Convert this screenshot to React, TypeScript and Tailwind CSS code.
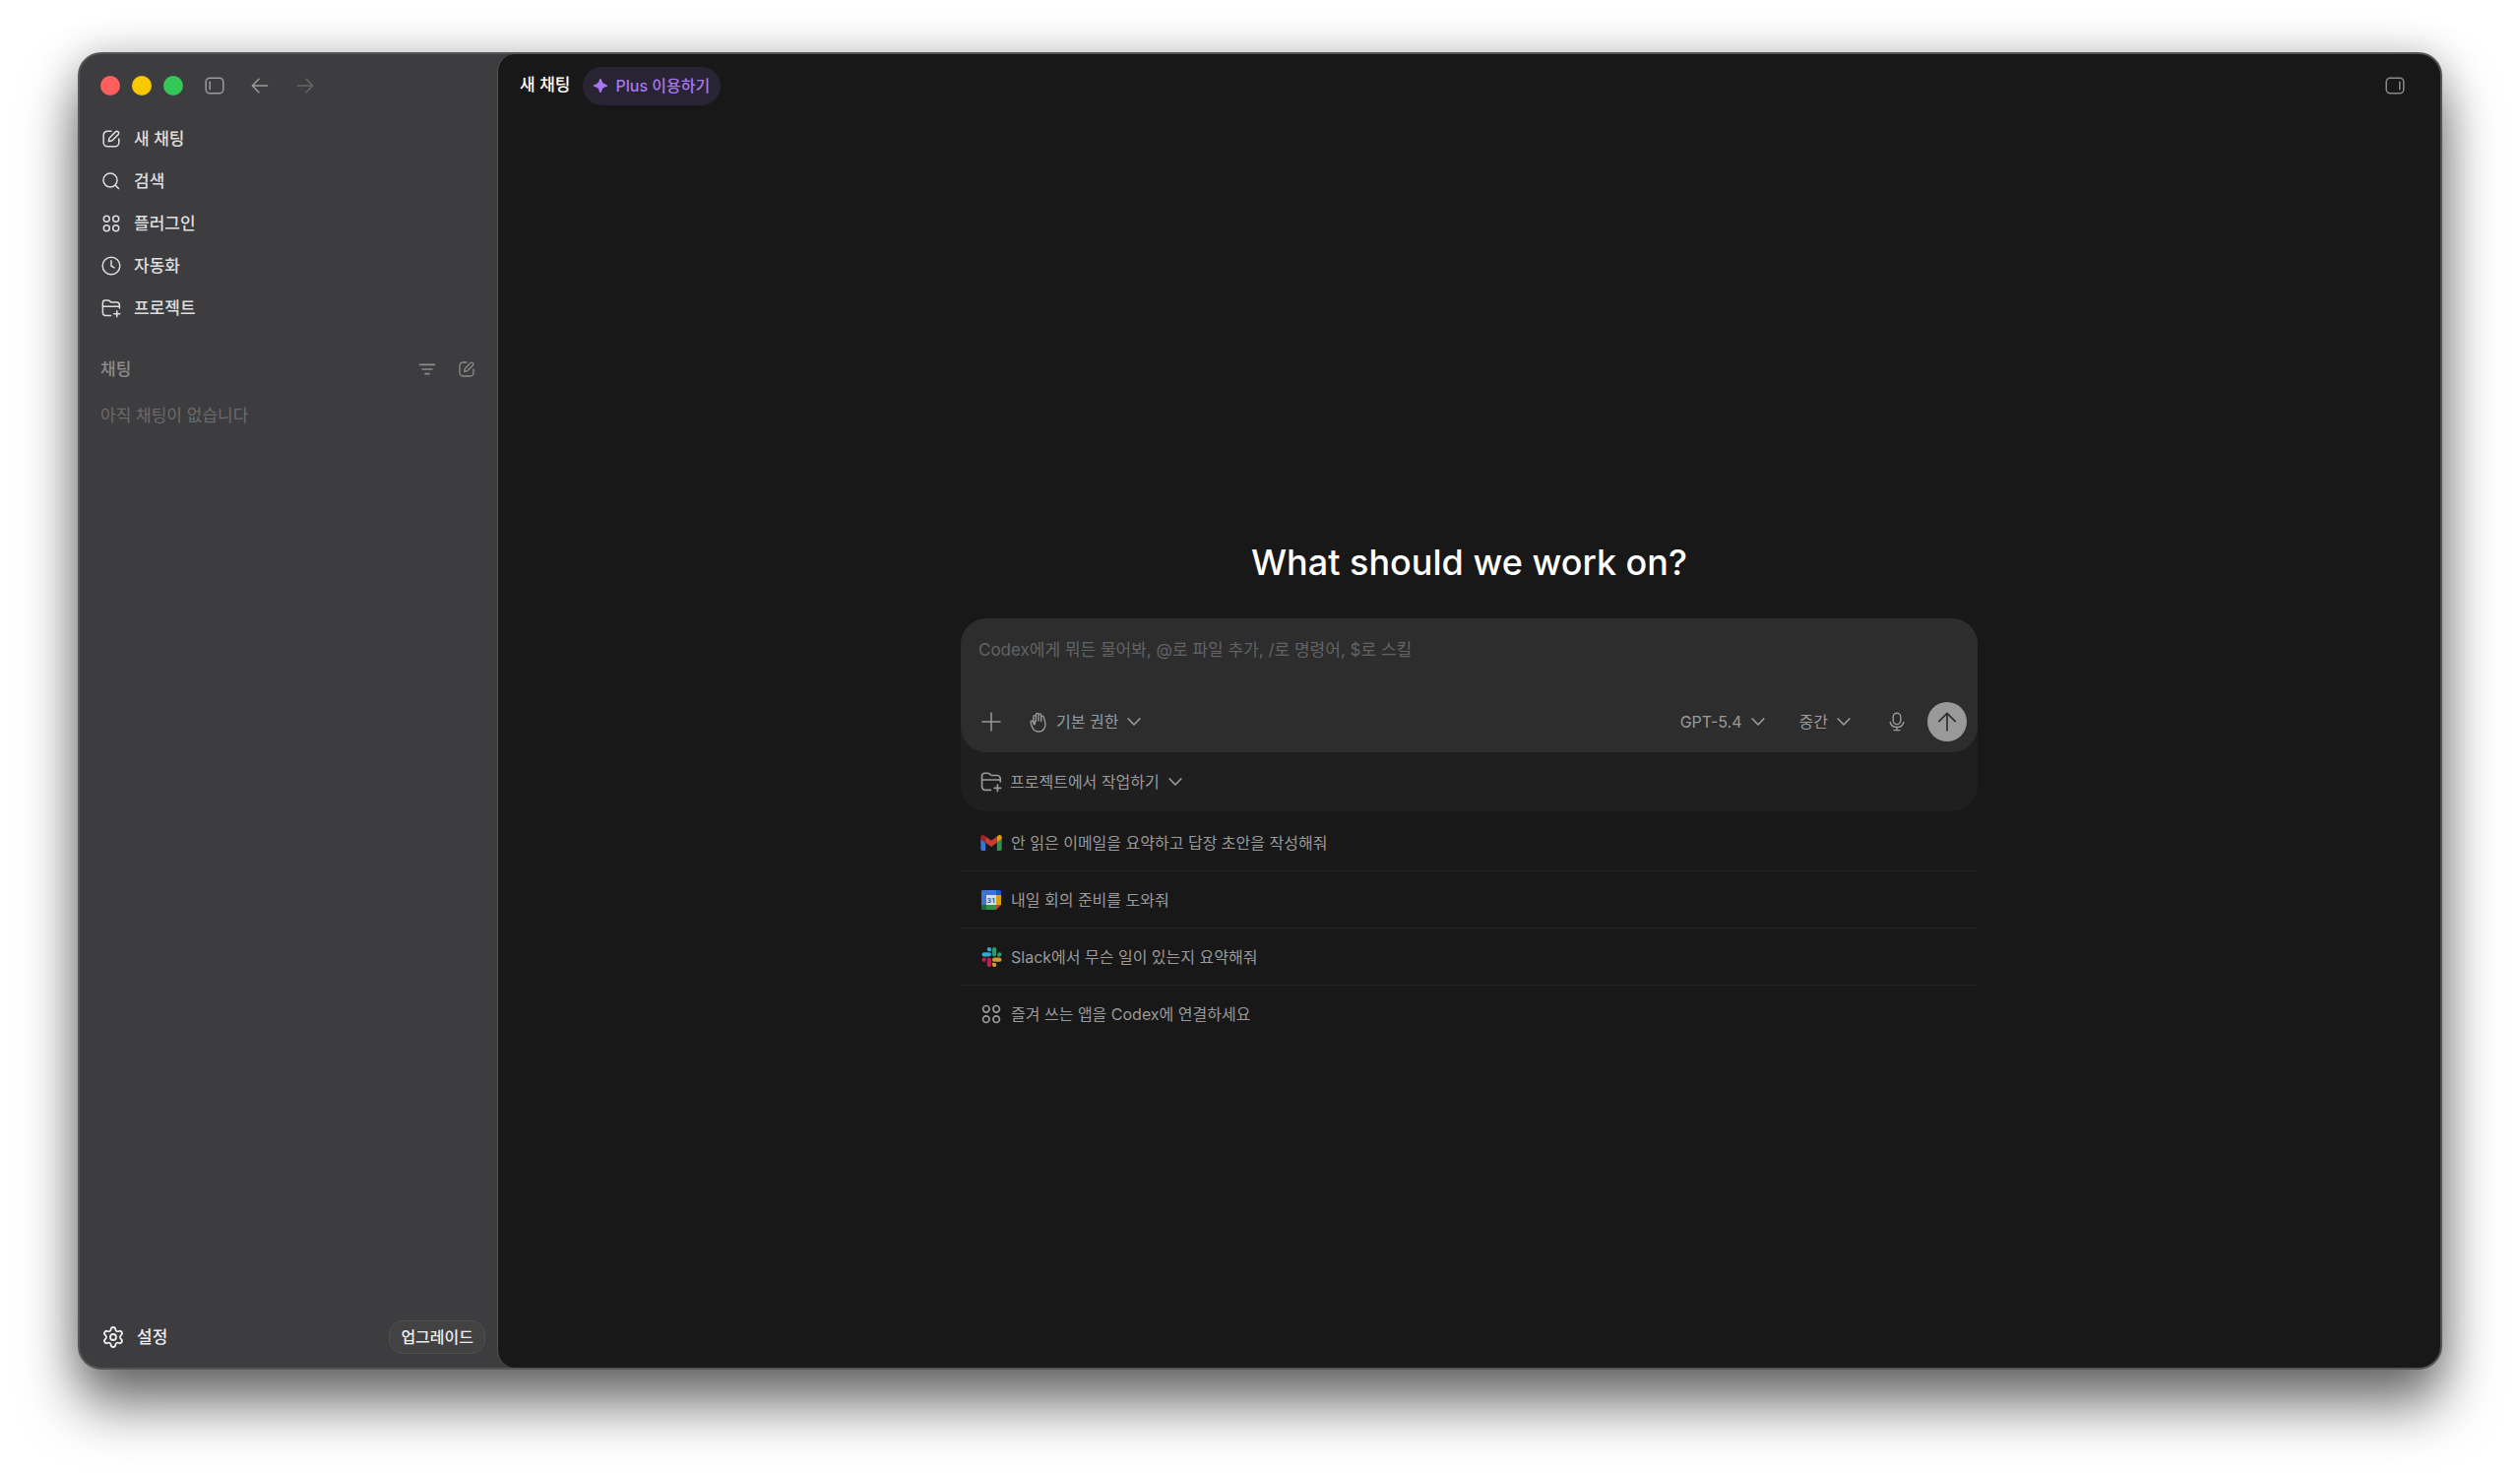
import { ReactNode } from 'react';
import { Settings } from 'lucide-react';

type IconProps = { className?: string };

function Svg({ className, width = 1.5, children }: IconProps & { width?: number; children: ReactNode }) {
    return (
        <svg
            className={`shrink-0 ${className ?? 'size-5'}`}
            viewBox="0 0 20 20"
            fill="none"
            stroke="currentColor"
            strokeWidth={width}
            strokeLinecap="round"
            strokeLinejoin="round"
            aria-hidden="true"
        >
            {children}
        </svg>
    );
}

const ComposeIcon = ({ className }: IconProps) => (
    <Svg className={className}>
        <path d="M10 2.2H6.2a4 4 0 0 0-4 4v7.6a4 4 0 0 0 4 4h7.6a4 4 0 0 0 4-4V10" />
        <path d="M7.4 12.6l.5-2.7a2 2 0 0 1 .6-1.1l5.9-5.9a1.9 1.9 0 0 1 2.7 2.7l-5.9 5.9a2 2 0 0 1-1.1.6z" />
    </Svg>
);

const SearchIcon = ({ className }: IconProps) => (
    <Svg className={className}>
        <circle cx="9" cy="9" r="7" />
        <path d="M14.1 14.1l3.4 3.4" />
    </Svg>
);

const AppsIcon = ({ className }: IconProps) => (
    <Svg className={className}>
        <circle cx="5.3" cy="5.3" r="3" />
        <circle cx="14.7" cy="5.3" r="3" />
        <circle cx="5.3" cy="14.7" r="3" />
        <circle cx="14.7" cy="14.7" r="3" />
    </Svg>
);

const ClockIcon = ({ className }: IconProps) => (
    <Svg className={className}>
        <circle cx="10" cy="10" r="8.8" />
        <path d="M10 4.8V10l3 1.9" />
    </Svg>
);

const FolderPlusIcon = ({ className }: IconProps) => (
    <Svg className={className}>
        <path d="M9.6 17.6H4.4a3 3 0 0 1-3-3V4.6A2.6 2.6 0 0 1 4 2h2.6c.9 0 1.4.3 2 .9l.5.5c.5.5 1 .7 1.7.7h4.6a3 3 0 0 1 3 3v2.8" />
        <path d="M1.4 8.2h17M15.8 12.8v6M12.8 15.8h6" />
    </Svg>
);

const ArrowIcon = ({ className, d }: IconProps & { d: string }) => (
    <Svg className={className}>
        <path d={d} />
    </Svg>
);

const PanelIcon = ({ x }: { x: number }) => (
    <Svg>
        <rect x="1.2" y="2.2" width="17.6" height="15.6" rx="4" />
        <path d={`M${x} 6.2v7.6`} />
    </Svg>
);

const FilterIcon = ({ className }: IconProps) => (
    <Svg className={className} width={1.7}>
        <path d="M2.5 5.4h15M5.2 10h9.600M8 14.600h4" />
    </Svg>
);

const HandIcon = ({ className }: IconProps) => (
    <Svg className={className} width={1.3}>
        <path d="M5.500 9.500V4.700a1.250 1.250 0 0 1 2.500 0V9M8 8.500V2.500a1.250 1.250 0 0 1 2.500 0v6M10.500 3a1.250 1.250 0 0 1 2.500 0v6M13 5.200a1.250 1.250 0 0 1 2.500 0l1.300 4.200c1.200 5.300-1.300 9.700-6.300 9.700-3.600 0-5.700-2-6.600-5.600l-1-3.300c-.4-1.500 1.500-2 2.200-.7l.9 2.200c.3.800 1 .7 1-.2V9" />
    </Svg>
);

const MicIcon = ({ className }: IconProps) => (
    <Svg className={className} width={1.4}>
        <rect x="6.200" y="1.200" width="7.600" height="11.400" rx="3.800" />
        <path d="M3.200 10.500c.6 3.200 3.400 5 6.800 5s6.200-1.800 6.800-5M10 15.500v3M7 18.600h6" />
    </Svg>
);

const ChevronIcon = () => (
    <svg
        className="pointer-events-none h-2 w-3.5 shrink-0"
        viewBox="0 0 14 8"
        fill="none"
        stroke="currentColor"
        strokeWidth="1.7"
        strokeLinecap="round"
        strokeLinejoin="round"
        aria-hidden="true"
    >
        <path d="M1.200 1L7 7l5.800-6" />
    </svg>
);

const GmailIcon = () => (
    <svg className="h-4 w-[22px] opacity-85" viewBox="0 0 88 66" aria-hidden="true">
        <path fill="#4285f4" d="M6 66h14V32L0 17v43c0 3.300 2.700 6 6 6" />
        <path fill="#34a853" d="M68 66h14c3.300 0 6-2.700 6-6V17L68 32" />
        <path fill="#fbbc04" d="M68 6v26l20-15V9c0-7.400-8.500-11.600-14.400-7.200" />
        <path fill="#ea4335" d="M20 32V6l24 18L68 6v26L44 50" />
        <path fill="#c5221f" d="M0 9v8l20 15V6l-5.600-4.200C8.500-2.600 0 1.600 0 9" />
    </svg>
);

const CalendarIcon = () => (
    <svg className="size-5 opacity-85" viewBox="0 0 20 20" aria-hidden="true">
        <path fill="#4285f4" d="M1.500 0H15v5H5v10H0V1.500A1.500 1.500 0 0 1 1.500 0" />
        <path fill="#1967d2" d="M15 0h3.500A1.500 1.500 0 0 1 20 1.500V5h-5z" />
        <path fill="#fbbc04" d="M15 5h5v10h-5z" />
        <path fill="#34a853" d="M5 15h10v5H5z" />
        <path fill="#188038" d="M0 15h5v5H1.500A1.500 1.500 0 0 1 0 18.500z" />
        <path fill="#ea4335" d="M15 15h5l-5 5z" />
        <path fill="#fff" d="M5 5h10v10H5z" />
        <text x="10" y="12.800" textAnchor="middle" fontSize="8" fontWeight="700" fill="#2f6fdb" fontFamily="Roboto, sans-serif">
            31
        </text>
    </svg>
);

const SlackIcon = () => (
    <svg className="h-5 w-[21px] opacity-85" viewBox="0 0 122.800 122.800" aria-hidden="true">
        <path fill="#e01e5a" d="M25.800 77.600c0 7.100-5.800 12.900-12.900 12.900S0 84.700 0 77.600s5.800-12.900 12.900-12.900h12.900zM32.300 77.600c0-7.100 5.800-12.900 12.900-12.900s12.900 5.800 12.900 12.900v32.300c0 7.100-5.800 12.900-12.900 12.900s-12.900-5.800-12.900-12.900z" />
        <path fill="#36c5f0" d="M45.200 25.800c-7.100 0-12.900-5.800-12.900-12.900S38.100 0 45.200 0s12.900 5.800 12.900 12.900v12.900zM45.200 32.300c7.100 0 12.900 5.800 12.900 12.900s-5.800 12.900-12.900 12.900H12.900C5.800 58.100 0 52.300 0 45.200s5.800-12.900 12.900-12.900z" />
        <path fill="#2eb67d" d="M97 45.200c0-7.100 5.800-12.900 12.900-12.900s12.900 5.800 12.900 12.900-5.800 12.900-12.900 12.900H97zM90.500 45.200c0 7.100-5.800 12.900-12.900 12.900s-12.900-5.800-12.900-12.900V12.900C64.700 5.800 70.500 0 77.600 0s12.900 5.800 12.900 12.900z" />
        <path fill="#ecb22e" d="M77.600 97c7.100 0 12.900 5.800 12.900 12.900s-5.800 12.900-12.900 12.900-12.900-5.800-12.900-12.900V97zM77.600 90.500c-7.100 0-12.900-5.800-12.900-12.900s5.800-12.900 12.900-12.900h32.300c7.100 0 12.900 5.800 12.900 12.900s-5.800 12.900-12.900 12.900z" />
    </svg>
);

function Picker({ label, value, icon }: { label: string; value: string; icon?: ReactNode }) {
    return (
        <label className="flex items-center gap-2">
            {icon}
            <span className="flex items-center gap-[9px]">
                <select aria-label={label} className="field-sizing-content h-8 appearance-none bg-transparent p-0 outline-none">
                    <option>{value}</option>
                </select>
                <ChevronIcon />
            </span>
        </label>
    );
}

const navItems = [
    { label: '새 채팅', icon: <ComposeIcon /> },
    { label: '검색', icon: <SearchIcon /> },
    { label: '플러그인', icon: <AppsIcon /> },
    { label: '자동화', icon: <ClockIcon /> },
    { label: '프로젝트', icon: <FolderPlusIcon /> },
];

const suggestions = [
    { label: '안 읽은 이메일을 요약하고 답장 초안을 작성해줘', icon: <GmailIcon /> },
    { label: '내일 회의 준비를 도와줘', icon: <CalendarIcon /> },
    { label: 'Slack에서 무슨 일이 있는지 요약해줘', icon: <SlackIcon /> },
    { label: '즐겨 쓰는 앱을 Codex에 연결하세요', icon: <AppsIcon className="size-[22px]" /> },
];

function Sidebar() {
    return (
        <aside className="flex w-[424px] shrink-0 flex-col text-[17px] leading-6 text-[#dededf]">
            <div className="flex h-16 items-center pl-[21px] text-[#9c9c9d]">
                <div className="flex gap-3">
                    <button aria-label="닫기" className="size-5 rounded-full bg-[#ff5f5f]" />
                    <button aria-label="최소화" className="size-5 rounded-full bg-[#f8c900]" />
                    <button aria-label="확대" className="size-5 rounded-full bg-[#35c759]" />
                </div>
                <button aria-label="사이드바" className="ml-[22px]">
                    <PanelIcon x={5.2} />
                </button>
                <button aria-label="뒤로" className="ml-[26px]">
                    <ArrowIcon d="M17.500 10H2.500M9 3.200L2.300 10 9 16.800" />
                </button>
                <button aria-label="앞으로" className="ml-[26px] text-[#666667]">
                    <ArrowIcon d="M2.500 10h15M11 3.200l6.700 6.800-6.700 6.800" />
                </button>
            </div>

            <nav className="flex flex-col">
                {navItems.map((item) => (
                    <a key={item.label} href="#" className="flex h-[43px] items-center gap-3 pl-[21px] font-medium">
                        <span className="flex w-[22px] justify-center">{item.icon}</span>
                        {item.label}
                    </a>
                ))}
            </nav>

            <div className="mt-[19px] flex h-11 items-center pr-[22px] pl-[21px] text-[#8b8b8c]">
                <h2 className="flex-1 font-medium">채팅</h2>
                <button aria-label="필터">
                    <FilterIcon className="size-5" />
                </button>
                <button aria-label="새 채팅" className="ml-[21px]">
                    <ComposeIcon className="size-[18px]" />
                </button>
            </div>
            <p className="mt-[13px] pl-[21px] text-[#6b6b6c]">아직 채팅이 없습니다</p>

            <div className="mt-auto flex h-[62px] items-center justify-between pr-3 pl-[22px]">
                <button className="flex items-center gap-3 font-medium text-[#ededee]">
                    <Settings className="size-6" strokeWidth={1.8} aria-hidden="true" />
                    설정
                </button>
                <button className="h-[34px] rounded-[14px] border border-[#505051] bg-[#424243] px-[11px] text-base font-medium text-[#ededee]">
                    업그레이드
                </button>
            </div>
        </aside>
    );
}

function Composer() {
    return (
        <form className="rounded-[26px] bg-[#1f1f1f]" onSubmit={(e) => e.preventDefault()}>
            <div className="flex h-[136px] flex-col rounded-[26px] bg-[#2d2d2d]">
                <textarea
                    aria-label="메시지"
                    placeholder="Codex에게 뭐든 물어봐, @로 파일 추가, /로 명령어, $로 스킬"
                    className="w-full flex-1 resize-none bg-transparent px-[18px] pt-5 text-[17px] leading-6 outline-none placeholder:text-[#636363]"
                />
                <div className="flex h-[62px] items-center pr-[11px] pl-[21px]">
                    <button type="button" aria-label="추가">
                        <Svg className="size-5">
                            <path d="M10 1v18M1 10h18" />
                        </Svg>
                    </button>
                    <div className="ml-[27px]">
                        <Picker label="권한" value="기본 권한" icon={<HandIcon className="size-[21px]" />} />
                    </div>
                    <div className="ml-auto flex items-center gap-[35px]">
                        <Picker label="모델" value="GPT-5.4" />
                        <Picker label="추론 수준" value="중간" />
                    </div>
                    <button type="button" aria-label="음성 입력" className="ml-[37px]">
                        <MicIcon className="size-5" />
                    </button>
                    <button aria-label="보내기" className="ml-[21px] flex size-10 items-center justify-center rounded-full bg-[#999] text-[#2d2d2d]">
                        <ArrowIcon className="size-[22px]" d="M10 18V2.200M2.500 9.700L10 2.200l7.500 7.500" />
                    </button>
                </div>
            </div>
            <div className="flex h-[60px] items-center pl-5">
                <Picker label="프로젝트" value="프로젝트에서 작업하기" icon={<FolderPlusIcon className="size-[22px]" />} />
            </div>
        </form>
    );
}

export default function App() {
    return (
        <div className="flex min-h-screen bg-white px-[79px] pt-[53px] pb-[105px] font-['Inter','Noto_Sans_CJK_KR',sans-serif]">
            <div className="flex flex-1 overflow-hidden rounded-[24px] border-2 border-[#555] bg-[#3d3d3f] shadow-[0_36px_56px_rgba(0,0,0,0.55),0_0_40px_rgba(0,0,0,0.2)]">
                <Sidebar />
                <main className="flex flex-1 flex-col rounded-l-[18px] border-l border-[#515152] bg-[#181818] text-base text-[#9a9a9a]">
                    <header className="flex h-16 items-center pr-9 pl-[22px] font-medium">
                        <h1 className="text-[17px] text-white">새 채팅</h1>
                        <button className="ml-[13px] flex h-[39px] items-center gap-2 rounded-full bg-[#292433] px-[11px] text-[#a876f0]">
                            <svg className="size-3.5" viewBox="0 0 16 16" fill="currentColor" aria-hidden="true">
                                <path d="M8 0c.7 0 1 .5 1.200 1.200.8 3.400 2.200 4.800 5.600 5.600.7.200 1.200.5 1.200 1.200s-.5 1-1.200 1.200c-3.400.8-4.800 2.200-5.600 5.600C9 15.500 8.700 16 8 16s-1-.5-1.200-1.200C6 11.400 4.600 10 1.200 9.200.5 9 0 8.700 0 8s.5-1 1.200-1.200C4.600 6 6 4.600 6.800 1.200 7 .5 7.300 0 8 0" />
                            </svg>
                            Plus 이용하기
                        </button>
                        <button aria-label="패널" className="ml-auto text-[#8a8a8a]">
                            <PanelIcon x={14.800} />
                        </button>
                    </header>

                    <section className="mx-auto w-full max-w-[1033px] pt-[428px]">
                        <h2 className="mb-[33px] text-center text-[36px] leading-12 font-medium text-white">What should we work on?</h2>
                        <Composer />
                        <ul className="mt-[3px]">
                            {suggestions.map((item) => (
                                <li key={item.label} className="h-[58px] border-b border-[#242424] last:border-b-0">
                                    <button className="flex h-full w-full items-center gap-[9px] pl-5">
                                        <span className="flex w-[22px] justify-center">{item.icon}</span>
                                        {item.label}
                                    </button>
                                </li>
                            ))}
                        </ul>
                    </section>
                </main>
            </div>
        </div>
    );
}
